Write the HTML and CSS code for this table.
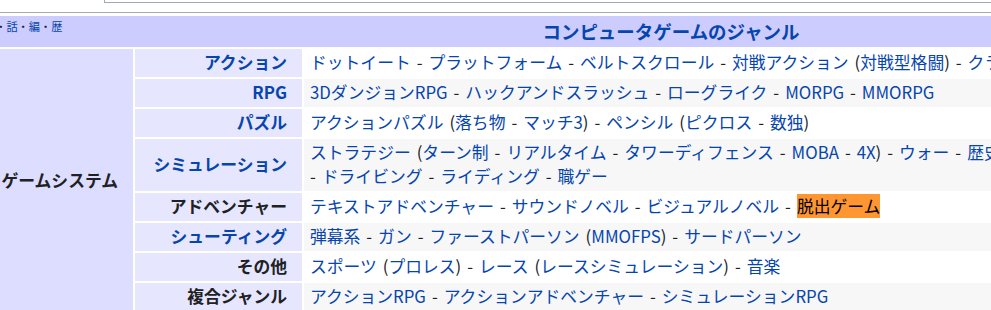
FILE: index.html
```html
<!DOCTYPE html>
<html lang="ja">
<head>
<meta charset="utf-8">
<title>コンピュータゲームのジャンル</title>
<link rel="stylesheet" href="styles.css">
</head>
<body>
<div class="topbox"></div>
<div class="navbox">
  <div class="title">
    <div class="navbar"><a href="#">表</a>・<a href="#">話</a>・<a href="#">編</a>・<a href="#">歴</a></div>
    <div class="title-text"><a href="#">コンピュータゲームのジャンル</a></div>
    <div class="spacer"></div>
  </div>
  <div class="body">
    <div class="group">ゲームシステム</div>
    <div class="rows">
      <div class="row">
        <div class="label"><a href="#">アクション</a></div>
        <div class="list"><a href="#">ドットイート</a> -&#8288;&nbsp;<a href="#">プラットフォーム</a> -&#8288;&nbsp;<a href="#">ベルトスクロール</a> -&#8288;&nbsp;<a href="#">対戦アクション</a> (<a href="#">対戦型格闘</a>) -&#8288;&nbsp;<a href="#">クライムアクション</a></div>
      </div>
      <div class="row even">
        <div class="label"><a href="#">RPG</a></div>
        <div class="list"><a href="#">3DダンジョンRPG</a> -&#8288;&nbsp;<a href="#">ハックアンドスラッシュ</a> -&#8288;&nbsp;<a href="#">ローグライク</a> -&#8288;&nbsp;<a href="#">MORPG</a> -&#8288;&nbsp;<a href="#">MMORPG</a></div>
      </div>
      <div class="row">
        <div class="label"><a href="#">パズル</a></div>
        <div class="list"><a href="#">アクションパズル</a> (<a href="#">落ち物</a> -&#8288;&nbsp;<a href="#">マッチ3</a>) -&#8288;&nbsp;<a href="#">ペンシル</a> (<a href="#">ピクロス</a> -&#8288;&nbsp;<a href="#">数独</a>)</div>
      </div>
      <div class="row even">
        <div class="label"><a href="#">シミュレーション</a></div>
        <div class="list"><a href="#">ストラテジー</a> (<a href="#">ターン制</a> -&#8288;&nbsp;<a href="#">リアルタイム</a> -&#8288;&nbsp;<a href="#">タワーディフェンス</a> -&#8288;&nbsp;<a href="#">MOBA</a> -&#8288;&nbsp;<a href="#">4X</a>) -&#8288;&nbsp;<a href="#">ウォー</a> -&#8288;&nbsp;<a href="#">歴史</a> -&#8288;&nbsp;<a href="#">経営</a> -&#8288;&nbsp;<a href="#">育成</a> -&#8288;&nbsp;<a href="#">恋愛</a> -&#8288;&nbsp;<a href="#">フライト</a> -&#8288;&nbsp;<a href="#">鉄道</a> -&#8288;&nbsp;<a href="#">ドライビング</a> -&#8288;&nbsp;<a href="#">ライディング</a> -&#8288;&nbsp;<a href="#">職ゲー</a></div>
      </div>
      <div class="row">
        <div class="label">アドベンチャー</div>
        <div class="list"><a href="#">テキストアドベンチャー</a> -&#8288;&nbsp;<a href="#">サウンドノベル</a> -&#8288;&nbsp;<a href="#">ビジュアルノベル</a> -&#8288;&nbsp;<mark class="hl">脱出ゲーム</mark></div>
      </div>
      <div class="row even">
        <div class="label"><a href="#">シューティング</a></div>
        <div class="list"><a href="#">弾幕系</a> -&#8288;&nbsp;<a href="#">ガン</a> -&#8288;&nbsp;<a href="#">ファーストパーソン</a> (<a href="#">MMOFPS</a>) -&#8288;&nbsp;<a href="#">サードパーソン</a></div>
      </div>
      <div class="row">
        <div class="label">その他</div>
        <div class="list"><a href="#">スポーツ</a> (<a href="#">プロレス</a>) -&#8288;&nbsp;<a href="#">レース</a> (<a href="#">レースシミュレーション</a>) -&#8288;&nbsp;<a href="#">音楽</a></div>
      </div>
      <div class="row even">
        <div class="label">複合ジャンル</div>
        <div class="list"><a href="#">アクションRPG</a> -&#8288;&nbsp;<a href="#">アクションアドベンチャー</a> -&#8288;&nbsp;<a href="#">シミュレーションRPG</a></div>
      </div>
    </div>
  </div>
</div>
</body>
</html>
```

FILE: styles.css
```css
html, body {
  margin: 0;
  padding: 0;
  background: #ffffff;
  overflow: hidden;
}

body {
  font-family: "Noto Sans CJK JP", "Noto Sans", sans-serif;
  color: #202122;
  font-size: 16.8px;
  width: 991px;
}

a {
  color: #0645ad;
  text-decoration: none;
  white-space: nowrap;
}

.topbox {
  margin-left: 104px;
  width: 1200px;
  height: 2px;
  border-left: 1px solid #a2a9b1;
  border-bottom: 1px solid #a2a9b1;
  margin-bottom: 9px;
}

.navbox {
  margin-left: -20px;
  width: 1374px;
  border: 1px solid #a2a9b1;
  padding: 3px;
  background: #ffffff;
}

.title {
  display: grid;
  grid-template-columns: 1fr auto 1fr;
  background: #ccccff;
  height: 31px;
}

.navbar {
  font-size: 11.2px;
  line-height: 20px;
  color: #202122;
  font-weight: normal;
}

.title-text {
  font-size: 18.48px;
  font-weight: bold;
  line-height: 30px;
  text-align: center;
}

.body {
  display: flex;
  gap: 2px;
  margin-top: 2px;
}

.group {
  width: 134px;
  flex: none;
  padding-right: 15px;
  background: #ddddff;
  font-weight: bold;
  display: flex;
  align-items: center;
  justify-content: flex-end;
  white-space: nowrap;
}

.rows {
  flex: 1;
  display: flex;
  flex-direction: column;
  gap: 2px;
}

.row {
  display: grid;
  grid-template-columns: 167px 1fr;
  gap: 2px;
}

.label {
  background: #e6e6ff;
  font-weight: bold;
  text-align: right;
  padding: 1px 15px 3px 0;
  line-height: 24px;
  display: flex;
  align-items: center;
  justify-content: flex-end;
  white-space: nowrap;
}

.list {
  background: #ffffff;
  padding: 1px 7px 3px 6px;
  line-height: 24px;
  word-spacing: 2.2px;
}

.row.even .list {
  background: #f7f7f7;
}

.hl {
  background: #ff9632;
  color: #000000;
}
```
